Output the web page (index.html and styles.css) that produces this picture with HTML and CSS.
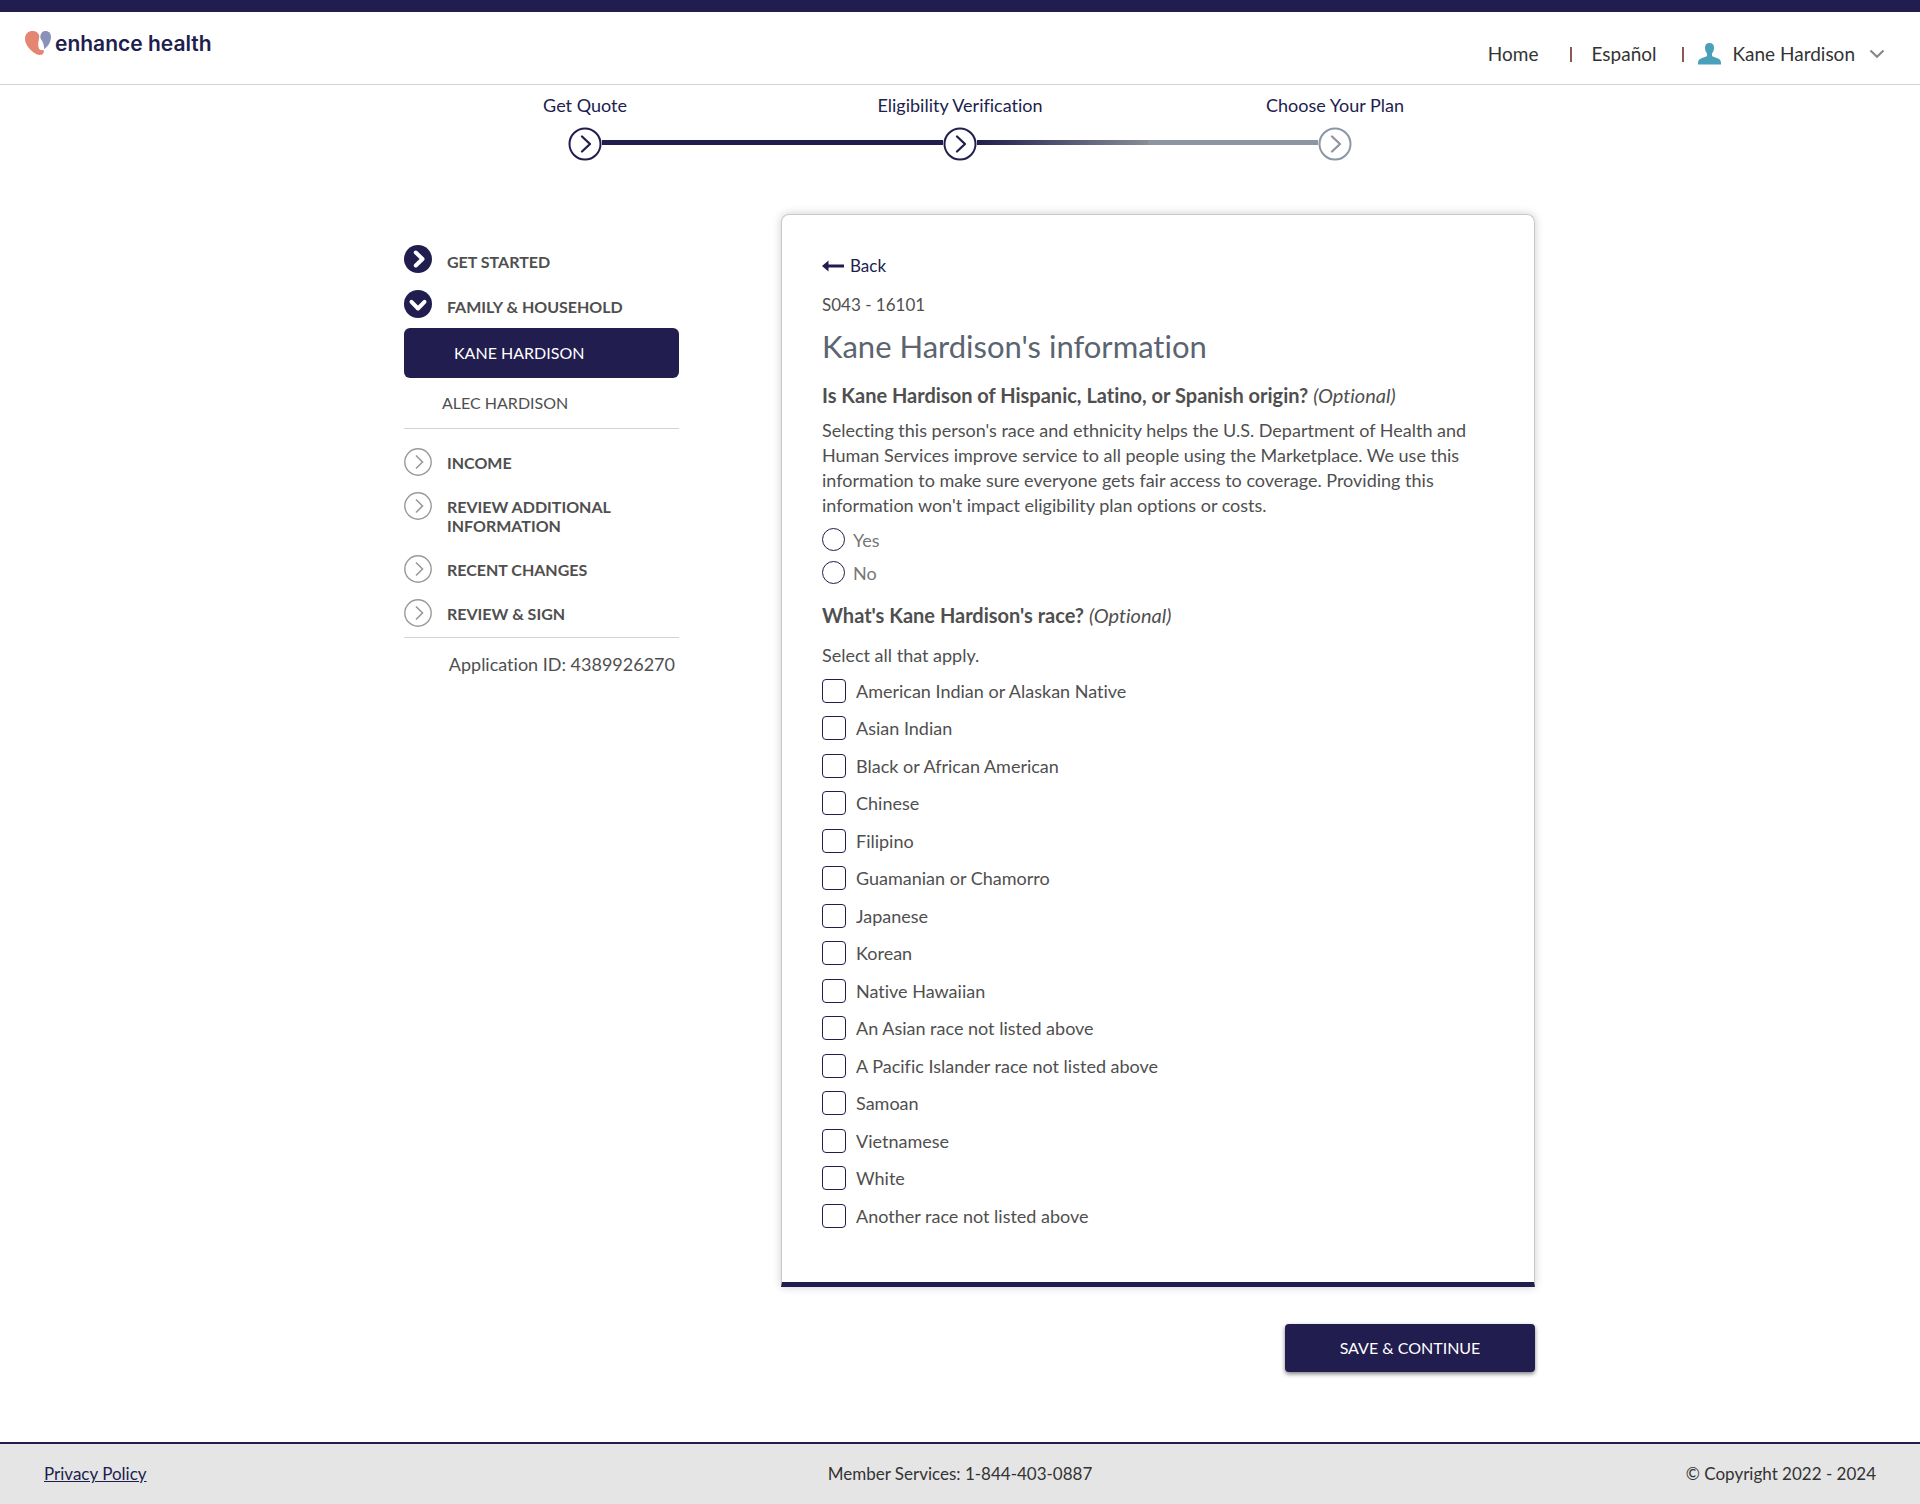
FILE: index.html
```html
<!DOCTYPE html>
<html lang="en">
<head>
<meta charset="utf-8">
<meta name="viewport" content="width=device-width, initial-scale=1">
<title>Enhance Health - Eligibility Verification</title>
<link rel="stylesheet" href="styles.css">
</head>
<body>
<svg class="sprite" aria-hidden="true">
  <symbol id="ring-right" viewBox="0 0 34 34"><circle cx="17" cy="17" r="15.5" fill="#fff" stroke="currentColor" stroke-width="2"/><path d="M14 9.5l8 7.500-8 7.500" fill="none" stroke="currentColor" stroke-width="2.300" stroke-linecap="round" stroke-linejoin="round"/></symbol>
  <symbol id="thin-right" viewBox="0 0 28 28"><circle cx="14" cy="14" r="13.200" fill="#fff" stroke="currentColor" stroke-width="1.400"/><path d="M12 7.500l6.500 6.500-6.500 6.500" fill="none" stroke="currentColor" stroke-width="1.600"/></symbol>
  <symbol id="disc-right" viewBox="0 0 28 28"><circle cx="14" cy="14" r="14" fill="currentColor"/><path d="M11.800 7.500l6.700 6.500-6.700 6.500" fill="none" stroke="#fff" stroke-width="4" stroke-linecap="round" stroke-linejoin="round"/></symbol>
  <symbol id="disc-down" viewBox="0 0 28 28"><circle cx="14" cy="14" r="14" fill="currentColor"/><path d="M7.500 11.800l6.500 6.700 6.500-6.700" fill="none" stroke="#fff" stroke-width="4" stroke-linecap="round" stroke-linejoin="round"/></symbol>
</svg>

<header class="site-header">
  <a class="logo" href="#">
    <svg class="logo-mark" viewBox="0 0 26 24" aria-hidden="true">
      <path d="M14.300 5C13.500 1.800 11 .1 8 .1 3.500 0 0 2.500 0 8c0 6 6 12.500 11.500 15.200 3 1.400 7 1 7.400-2.400.1-1.400-.7-2-1.900-1.700-2.400.5-3.600-1.600-3.800-4.600-.2-3.500 1-6 1.100-9.500z" fill="#e58673"/>
      <path d="M15.300 5.500C15.700 2 17.500 0 20.500 0 24 0 26 2.300 26 6c0 4.800-3 9.500-6.800 12.200 0-4-1.200-7.200-3.300-10.200-.5-.8-.7-1.500-.6-2.500z" fill="#8992b8"/>
    </svg>
    <span>enhance health</span>
  </a>
  <nav class="top-nav">
    <a class="home-link" href="#">Home</a>
    <span class="bar"></span>
    <a class="lang-link" href="#">Español</a>
    <span class="bar"></span>
    <button class="user-menu" type="button">
      <svg class="user-icon" viewBox="0 0 23 22" aria-hidden="true"><path d="M11.500 0C14.500 0 16 1.800 16 4.500c0 2.700-.8 4.600-2 6v2.200c.5 1 2 1.300 4.300 2C21.800 15.800 23 17.500 23 20v1.500H0V20c0-2.500 1.200-4.200 4.700-5.300 2.300-.7 3.800-1 4.300-2v-2.200c-1.200-1.400-2-3.300-2-6C7 1.800 8.500 0 11.500 0z" fill="#4a9fb9"/></svg>
      <span>Kane Hardison</span>
      <svg class="caret" viewBox="0 0 16 10" aria-hidden="true"><path d="M1.500 1.500L8 7.800l6.500-6.300" fill="none" stroke="#858585" stroke-width="2"/></svg>
    </button>
  </nav>
</header>

<ol class="stepper">
  <li class="step"><span class="step-label">Get Quote</span><span class="track"><span class="line none"></span><svg class="step-icon"><use href="#ring-right"/></svg><span class="line"></span></span></li>
  <li class="step"><span class="step-label">Eligibility Verification</span><span class="track"><span class="line"></span><svg class="step-icon"><use href="#ring-right"/></svg><span class="line fade"></span></span></li>
  <li class="step"><span class="step-label">Choose Your Plan</span><span class="track"><span class="line pending"></span><svg class="step-icon later"><use href="#ring-right"/></svg><span class="line none"></span></span></li>
</ol>

<main class="layout">
  <aside class="sidebar">
    <nav>
      <ul class="sections">
        <li><a class="section" href="#"><svg class="section-icon done"><use href="#disc-right"/></svg><span>GET STARTED</span></a></li>
        <li><a class="section" href="#"><svg class="section-icon done"><use href="#disc-down"/></svg><span>FAMILY &amp; HOUSEHOLD</span></a></li>
      </ul>
      <ul class="members">
        <li><a class="member active" href="#">KANE HARDISON</a></li>
        <li><a class="member" href="#">ALEC HARDISON</a></li>
      </ul>
      <ul class="sections later-sections">
        <li><a class="section" href="#"><svg class="section-icon"><use href="#thin-right"/></svg><span>INCOME</span></a></li>
        <li><a class="section" href="#"><svg class="section-icon"><use href="#thin-right"/></svg><span>REVIEW ADDITIONAL INFORMATION</span></a></li>
        <li><a class="section" href="#"><svg class="section-icon"><use href="#thin-right"/></svg><span>RECENT CHANGES</span></a></li>
        <li><a class="section" href="#"><svg class="section-icon"><use href="#thin-right"/></svg><span>REVIEW &amp; SIGN</span></a></li>
      </ul>
    </nav>
    <p class="app-id">Application ID: 4389926270</p>
  </aside>

  <form class="content">
    <div class="card">
      <a class="back" href="#"><svg class="back-icon" viewBox="0 0 22 12" aria-hidden="true"><path d="M0 6L6.500 .5V4.500H22v3H6.500v4z" fill="#211d4e"/></svg><span>Back</span></a>
      <p class="code">S043 - 16101</p>
      <h1>Kane Hardison's information</h1>
      <fieldset>
        <legend>Is Kane Hardison of Hispanic, Latino, or Spanish origin? <em>(Optional)</em></legend>
        <p class="help">Selecting this person's race and ethnicity helps the U.S. Department of Health and Human Services improve service to all people using the Marketplace. We use this information to make sure everyone gets fair access to coverage. Providing this information won't impact eligibility plan options or costs.</p>
        <div class="radios">
          <label><input type="radio" name="origin">Yes</label>
          <label><input type="radio" name="origin">No</label>
        </div>
      </fieldset>
      <fieldset>
        <legend>What's Kane Hardison's race? <em>(Optional)</em></legend>
        <p class="hint">Select all that apply.</p>
        <ul class="checks">
          <li><label><input type="checkbox">American Indian or Alaskan Native</label></li>
          <li><label><input type="checkbox">Asian Indian</label></li>
          <li><label><input type="checkbox">Black or African American</label></li>
          <li><label><input type="checkbox">Chinese</label></li>
          <li><label><input type="checkbox">Filipino</label></li>
          <li><label><input type="checkbox">Guamanian or Chamorro</label></li>
          <li><label><input type="checkbox">Japanese</label></li>
          <li><label><input type="checkbox">Korean</label></li>
          <li><label><input type="checkbox">Native Hawaiian</label></li>
          <li><label><input type="checkbox">An Asian race not listed above</label></li>
          <li><label><input type="checkbox">A Pacific Islander race not listed above</label></li>
          <li><label><input type="checkbox">Samoan</label></li>
          <li><label><input type="checkbox">Vietnamese</label></li>
          <li><label><input type="checkbox">White</label></li>
          <li><label><input type="checkbox">Another race not listed above</label></li>
        </ul>
      </fieldset>
    </div>
    <button class="save" type="submit">SAVE &amp; CONTINUE</button>
  </form>
</main>

<footer class="site-footer">
  <a href="#">Privacy Policy</a>
  <span class="phone">Member Services: 1-844-403-0887</span>
  <span class="copyright">© Copyright 2022 - 2024</span>
</footer>
</body>
</html>
```
FILE: styles.css
```css
:root {
  --navy: #211d4e;
  --text: #4f4f4f;
  --rule: #d3d3d3;
}

* { box-sizing: border-box; }

body {
  margin: 0;
  min-height: 100vh;
  display: flex;
  flex-direction: column;
  background: #fff;
  color: var(--text);
  font: 18px/20px Lato, "Noto Sans", sans-serif;
  font-variant-ligatures: none;
}

a { color: inherit; text-decoration: none; }
button { font: inherit; color: inherit; border: 0; background: none; padding: 0; cursor: pointer; }
ul, ol { list-style: none; margin: 0; padding: 0; }
p, h1 { margin: 0; }
svg { flex: none; }
.sprite { position: absolute; width: 0; height: 0; }

/* Header */
.site-header {
  display: flex;
  justify-content: space-between;
  height: 85px;
  padding: 0 35px 0 25px;
  border-top: 12px solid var(--navy);
  border-bottom: 1px solid var(--rule);
}
.logo {
  display: flex;
  align-items: flex-start;
  gap: 4px;
  padding-top: 19px;
  color: var(--navy);
  font: 600 21px/26px Inter, sans-serif;
}
.logo-mark { width: 26px; height: 24px; }
.top-nav {
  display: flex;
  align-items: center;
  padding-top: 12px;
  color: #333;
  font-size: 19px;
}
.bar { width: 2px; height: 15px; background: #8c5a4a; }
.home-link { margin-right: 31px; }
.lang-link { margin: 0 25px 0 20px; }
.user-menu { display: flex; align-items: center; margin-left: 14px; }
.user-icon { width: 23px; height: 22px; margin-right: 12px; }
.caret { width: 16px; height: 10px; margin-left: 14px; }

/* Progress steps */
.stepper {
  display: grid;
  grid-template-columns: repeat(3, 1fr);
  width: 100%;
  max-width: 1125px;
  margin: 0 auto;
  padding-top: 10px;
  color: var(--navy);
}
.step-label { display: block; text-align: center; }
.track { display: flex; align-items: center; margin-top: 12px; }
.line { flex: 1; height: 5px; margin-bottom: 3px; background: var(--navy); }
.line.none { background: none; }
.line.fade { background: linear-gradient(90deg, var(--navy), #878c95); }
.line.pending { background: #8c96a3; }
.step-icon { width: 34px; height: 34px; }
.step-icon.later { color: #8c96a3; }

/* Page body */
.layout {
  display: grid;
  grid-template-columns: 275px minmax(0, 754px);
  justify-content: space-between;
  width: 100%;
  max-width: 1170px;
  margin: 0 auto;
  padding: 53px 10px 70px 29px;
}

/* Sidebar */
.sidebar { padding-top: 31px; }
.sections { display: flex; flex-direction: column; gap: 16px; }
.section { display: flex; gap: 15px; font-size: 16px; font-weight: 700; line-height: 19px; }
.section span { padding-top: 7px; padding-bottom: 3px; }
.section-icon { width: 28px; height: 28px; color: #999; }
.section-icon.done { color: var(--navy); }
.members { margin-top: 9px; border-bottom: 1px solid var(--rule); }
.member { display: block; padding: 15px 38px; font-size: 16px; }
.member.active { padding: 15px 50px; border-radius: 6px; background: var(--navy); color: #fff; }
.later-sections { margin-top: 19px; padding-bottom: 10px; border-bottom: 1px solid var(--rule); }
.later-sections .section span { padding-top: 5px; padding-bottom: 4px; }
.app-id { padding: 16px 4px 0 0; text-align: right; }

/* Form card */
.content { display: flex; flex-direction: column; }
.card {
  padding: 40px 40px 54px;
  border: 1px solid #c8c8c8;
  border-bottom: 5px solid var(--navy);
  border-radius: 8px 8px 0 0;
  box-shadow: 0 0 10px rgba(0, 0, 0, .2);
}
.back { display: inline-flex; align-items: center; gap: 6px; color: var(--navy); font-size: 17px; }
.back-icon { width: 22px; height: 12px; }
.code { margin-top: 19px; font-size: 17px; }
h1 { margin-top: 13px; color: #5b6470; font-size: 31px; font-weight: 400; line-height: 36px; }
fieldset { margin: 0; padding: 0; border: 0; min-width: 0; }
legend { padding: 19px 0 0; font-size: 20px; font-weight: 700; line-height: 24px; }
legend em { font-weight: 400; }
.help { margin-top: 11px; line-height: 25px; }
.radios { display: flex; flex-direction: column; gap: 10px; padding-top: 10px; color: #777; }
.radios label { display: flex; align-items: center; gap: 8px; }
.hint { margin: 18px 0 9px; }
.checks label { display: flex; align-items: center; gap: 10px; }
.checks li:nth-child(even) { margin-top: 13px; }
.checks li:nth-child(odd) { margin-top: 14px; }
input {
  appearance: none;
  flex: none;
  width: 24px;
  height: 24px;
  margin: 0;
  border: 1px solid var(--navy);
  border-radius: 4px;
  background: #fff;
}
input[type="radio"] { width: 23px; height: 23px; border-radius: 50%; }
input:checked { background: var(--navy); }
.save {
  align-self: flex-end;
  width: 250px;
  height: 48px;
  margin-top: 37px;
  border-radius: 4px;
  background: var(--navy);
  color: #fff;
  font-size: 16px;
  box-shadow: 0 2px 4px rgba(0, 0, 0, .5);
}

/* Footer */
.site-footer {
  display: grid;
  grid-template-columns: 1fr auto 1fr;
  align-items: center;
  height: 62px;
  margin-top: auto;
  padding: 0 44px;
  border-top: 2px solid var(--navy);
  background: #e5e5e5;
  color: #333;
  font-size: 17px;
}
.site-footer a { justify-self: start; color: var(--navy); text-decoration: underline; }
.copyright { text-align: right; }
```
